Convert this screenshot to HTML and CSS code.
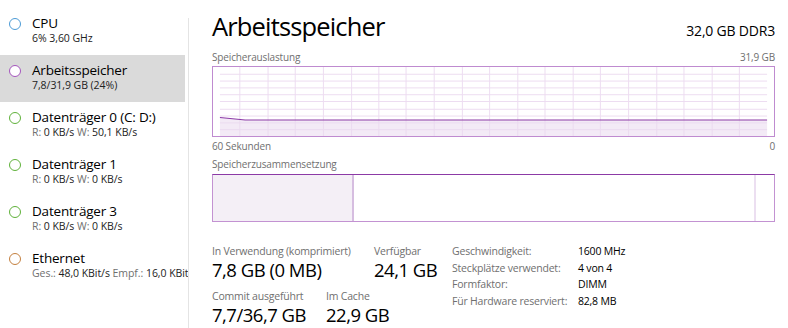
FILE: index.html
```html
<!DOCTYPE html>
<html lang="de">
<head>
    <meta charset="UTF-8">
    <title>Task-Manager - Leistung</title>
    <link rel="stylesheet" href="styles.css">
</head>
<body>
<div class="app">
    <div class="sidebar">
        <div class="item">
            <span class="dot cpu"></span>
            <div class="item-text">
                <div class="item-title">CPU</div>
                <div class="item-sub"><b>6% 3,60 GHz</b></div>
            </div>
        </div>
        <div class="item selected">
            <span class="dot mem"></span>
            <div class="item-text">
                <div class="item-title">Arbeitsspeicher</div>
                <div class="item-sub"><b>7,8/31,9 GB (24%)</b></div>
            </div>
        </div>
        <div class="item">
            <span class="dot disk"></span>
            <div class="item-text">
                <div class="item-title">Datenträger 0 (C: D:)</div>
                <div class="item-sub">R: <b>0 KB/s</b> W: <b>50,1 KB/s</b></div>
            </div>
        </div>
        <div class="item">
            <span class="dot disk"></span>
            <div class="item-text">
                <div class="item-title">Datenträger 1</div>
                <div class="item-sub">R: <b>0 KB/s</b> W: <b>0 KB/s</b></div>
            </div>
        </div>
        <div class="item">
            <span class="dot disk"></span>
            <div class="item-text">
                <div class="item-title">Datenträger 3</div>
                <div class="item-sub">R: <b>0 KB/s</b> W: <b>0 KB/s</b></div>
            </div>
        </div>
        <div class="item">
            <span class="dot net"></span>
            <div class="item-text">
                <div class="item-title">Ethernet</div>
                <div class="item-sub">Ges.: <b>48,0 KBit/s</b> Empf.: <b>16,0 KBit/s</b></div>
            </div>
        </div>
    </div>
    <div class="divider"></div>

    <div class="main">
        <div class="header">
            <h1>Arbeitsspeicher</h1>
            <span class="total">32,0 GB DDR3</span>
        </div>

        <div class="caption">
            <span>Speicherauslastung</span>
            <span>31,9 GB</span>
        </div>
        <svg class="graph" width="563" height="71" viewBox="0 0 563 71">
            <g stroke="#ecdcf1" stroke-width="1">
                <line x1="0" y1="7.5" x2="563" y2="7.5"/>
                <line x1="0" y1="14.5" x2="563" y2="14.5"/>
                <line x1="0" y1="21.5" x2="563" y2="21.5"/>
                <line x1="0" y1="28.5" x2="563" y2="28.5"/>
                <line x1="0" y1="35.5" x2="563" y2="35.5"/>
                <line x1="0" y1="43.5" x2="563" y2="43.5"/>
                <line x1="0" y1="50.5" x2="563" y2="50.5"/>
                <line x1="0" y1="57.5" x2="563" y2="57.5"/>
                <line x1="0" y1="64.5" x2="563" y2="64.5"/>
                <line x1="20.5" y1="0" x2="20.5" y2="71"/>
                <line x1="49.5" y1="0" x2="49.5" y2="71"/>
                <line x1="77.5" y1="0" x2="77.5" y2="71"/>
                <line x1="106.5" y1="0" x2="106.5" y2="71"/>
                <line x1="135.5" y1="0" x2="135.5" y2="71"/>
                <line x1="163.5" y1="0" x2="163.5" y2="71"/>
                <line x1="191.5" y1="0" x2="191.5" y2="71"/>
                <line x1="220.5" y1="0" x2="220.5" y2="71"/>
                <line x1="249.5" y1="0" x2="249.5" y2="71"/>
                <line x1="277.5" y1="0" x2="277.5" y2="71"/>
                <line x1="306.5" y1="0" x2="306.5" y2="71"/>
                <line x1="334.5" y1="0" x2="334.5" y2="71"/>
                <line x1="363.5" y1="0" x2="363.5" y2="71"/>
                <line x1="391.5" y1="0" x2="391.5" y2="71"/>
                <line x1="420.5" y1="0" x2="420.5" y2="71"/>
                <line x1="449.5" y1="0" x2="449.5" y2="71"/>
                <line x1="477.5" y1="0" x2="477.5" y2="71"/>
                <line x1="506.5" y1="0" x2="506.5" y2="71"/>
                <line x1="534.5" y1="0" x2="534.5" y2="71"/>
            </g>
            <path d="M0 52 L26 54.5 L563 54.5 L563 71 L0 71 Z" fill="#e9d9ef" fill-opacity="0.55"/>
            <path d="M0 52 L26 54.5 L563 54.5" fill="none" stroke="#8b3aa6" stroke-width="1.2"/>
        </svg>
        <div class="caption axis">
            <span>60 Sekunden</span>
            <span>0</span>
        </div>

        <div class="caption comp-caption">
            <span>Speicherzusammensetzung</span>
        </div>
        <div class="composition">
            <div class="seg used"></div>
            <div class="seg standby"></div>
            <div class="seg free"></div>
        </div>

        <div class="details">
            <div class="stats">
                <div class="stat-row">
                    <div class="stat first-used">
                        <div class="stat-label">In Verwendung (komprimiert)</div>
                        <div class="stat-value">7,8 GB (0 MB)</div>
                    </div>
                    <div class="stat">
                        <div class="stat-label">Verfügbar</div>
                        <div class="stat-value">24,1 GB</div>
                    </div>
                </div>
                <div class="stat-row">
                    <div class="stat first-commit">
                        <div class="stat-label">Commit ausgeführt</div>
                        <div class="stat-value">7,7/36,7 GB</div>
                    </div>
                    <div class="stat">
                        <div class="stat-label">Im Cache</div>
                        <div class="stat-value">22,9 GB</div>
                    </div>
                </div>
            </div>
            <div class="props">
                <span class="prop-label">Geschwindigkeit:</span><span class="prop-value">1600 MHz</span>
                <span class="prop-label">Steckplätze verwendet:</span><span class="prop-value">4 von 4</span>
                <span class="prop-label">Formfaktor:</span><span class="prop-value">DIMM</span>
                <span class="prop-label">Für Hardware reserviert:</span><span class="prop-value">82,8 MB</span>
            </div>
        </div>
    </div>
</div>
</body>
</html>
```

FILE: styles.css
```css
html, body { margin: 0; padding: 0; background: #fff; }
body { font-family: "Open Sans", "Noto Sans", sans-serif; color: #000; width: 788px; height: 328px; overflow: hidden; }

.app { display: flex; height: 328px; }

/* left list */
.sidebar { width: 188px; padding-top: 8px; flex-shrink: 0; overflow: hidden; }
.item {
    display: flex;
    align-items: flex-start;
    height: 47px;
    width: 185px;
    box-sizing: border-box;
    padding: 6px 0 0 9px;
}
.item.selected { background: #dadada; }
.dot {
    width: 12px;
    height: 12px;
    box-sizing: border-box;
    border-radius: 50%;
    border: 1.4px solid;
    background: #fff;
    margin: 4px 11px 0 0;
    flex-shrink: 0;
}
.dot.cpu { border-color: #4c9bd6; }
.dot.mem { border-color: #a455bd; }
.dot.disk { border-color: #5fb13a; }
.dot.net { border-color: #c47f3e; }
.item-text { white-space: nowrap; }
.item-title { font-size: 13.5px; letter-spacing: -0.2px; line-height: 18px; }
.item-sub { font-size: 10.5px; letter-spacing: -0.05px; line-height: 13px; color: #6f6f6f; }
.item-sub b { font-weight: normal; color: #222; }

.divider { width: 1px; background: #e4e4e4; margin-top: 18px; flex-shrink: 0; }

/* right panel */
.main { flex: 1; padding: 0 13px 0 23px; }
.header { display: flex; justify-content: space-between; align-items: baseline; height: 46px; }
h1 { font-weight: normal; font-size: 25.5px; letter-spacing: -0.85px; margin: 8px 0 0 0; line-height: 36px; }
.total { font-size: 14px; letter-spacing: -0.2px; }

.caption {
    display: flex;
    justify-content: space-between;
    font-size: 10px;
    letter-spacing: -0.15px;
    color: #6f6f6f;
    line-height: 14px;
    height: 14px;
    margin: 4px 0 2px 0;
}
.graph { display: block; border: 1px solid #bf8bd0; box-sizing: border-box; background: #fff; }
.caption.axis { margin: 2px 0 0 0; }
.caption.comp-caption { margin: 4px 0 3px 0; }

.composition {
    display: flex;
    height: 48px;
    border: 1px solid #c392d2;
    border-top-color: #8c3aa6;
    box-sizing: border-box;
}
.seg.used { width: 139px; background: #f4eff6; border-right: 2px solid #d6bde0; }
.seg.standby { flex: 1; border-right: 2px solid #ecdff1; }
.seg.free { width: 18px; }

.details { display: flex; align-items: flex-start; margin-top: 22px; }
.stats { width: 240px; }
.stat-row { display: flex; gap: 18px; margin-bottom: 7px; }
.stat.first-used { width: 144px; }
.stat.first-commit { width: 96px; }
.stat-label { font-size: 10.5px; letter-spacing: -0.2px; color: #6f6f6f; line-height: 14px; white-space: nowrap; }
.stat-value { font-size: 18.5px; letter-spacing: -0.5px; line-height: 24px; white-space: nowrap; }

.props {
    display: grid;
    grid-template-columns: 126px auto;
    align-content: start;
    font-size: 10.5px;
    letter-spacing: -0.2px;
    line-height: 16.5px;
    margin-top: -1px;
}
.prop-label { color: #6f6f6f; white-space: nowrap; }
.prop-value { color: #000; white-space: nowrap; }
```
